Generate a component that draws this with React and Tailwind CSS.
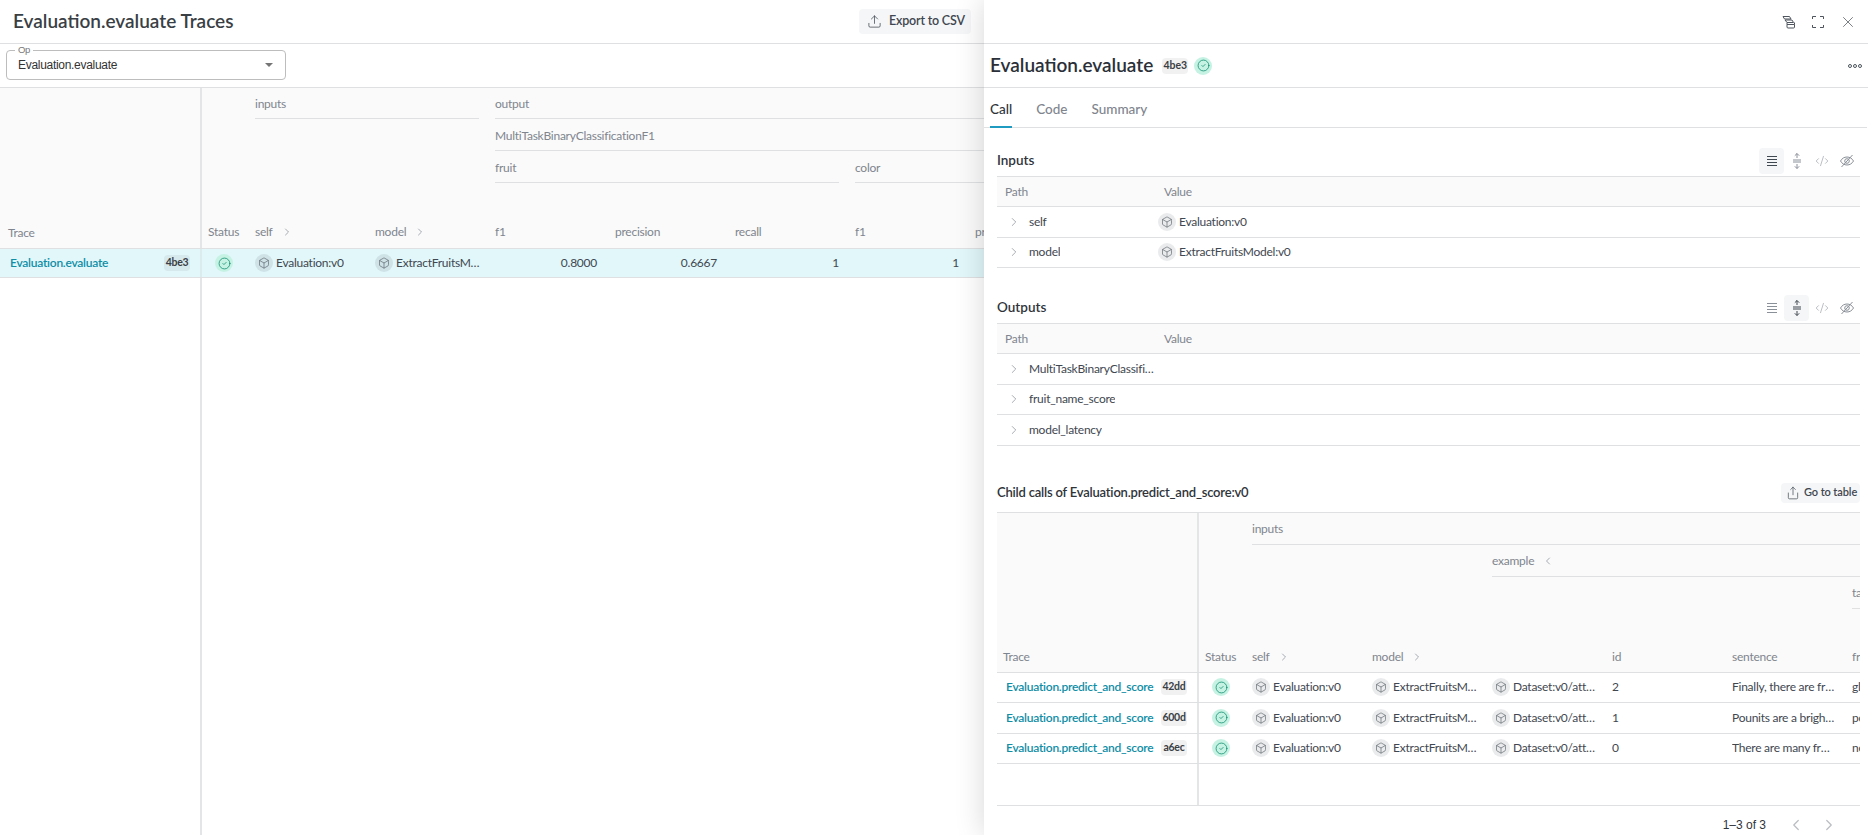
import React from "react";
import { Box, ChevronLeft, ChevronRight, CircleCheck, Upload, Share, X, CodeXml } from "lucide-react";

const sans = "font-['Lato',sans-serif]";

function Status() {
  return (
    <span className="flex h-[18px] w-[18px] items-center justify-center rounded-full bg-[#c5f2e3]">
      <CircleCheck size={13} strokeWidth={1.4} className="text-[#0a8a6a]" />
    </span>
  );
}

function Hash({ children }) {
  return (
    <span className="flex h-[16px] w-[26px] shrink-0 items-center justify-center rounded-[4px] bg-[rgba(70,60,60,0.07)] text-[10.5px] font-bold text-[#3a3f45]">
      {children}
    </span>
  );
}

function Obj({ children, className = "" }) {
  return (
    <span className={`flex min-w-0 items-center gap-[3px] ${className}`}>
      <span className="flex h-[18px] w-[18px] shrink-0 items-center justify-center rounded-full bg-[rgba(60,70,85,0.11)]">
        <Box size={12} strokeWidth={1.2} className="text-[#4e555e]" />
      </span>
      <span className="truncate text-[12px] tracking-[-0.25px] text-[#3f4750]">{children}</span>
    </span>
  );
}

function HeadLabel({ children, className = "" }) {
  return <div className={`flex items-center text-[12px] tracking-[-0.25px] text-[#7f858e] ${className}`}>{children}</div>;
}

function Chev({ left }) {
  const I = left ? ChevronLeft : ChevronRight;
  return <I size={12} strokeWidth={1.3} className="ml-[8px] text-[#79808a]" />;
}

function LeftTable() {
  return (
    <div className="flex min-h-0 flex-1 flex-col overflow-hidden">
      <div className="grid h-[161px] w-[1200px] shrink-0 grid-cols-[202px_53px_repeat(8,120px)] grid-rows-[31px_32px_32px_33px_32px] border-b border-[#dfe0e2] bg-[#fafafa]">
        <HeadLabel className="col-start-1 row-span-5 row-start-1 items-end border-r-2 border-[#e4e5e7] pb-[6px] pl-[8px]">Trace</HeadLabel>
        <HeadLabel className="col-span-2 col-start-3 row-start-1 mr-[16px] border-b border-[#dfe0e2] pt-[2px]">inputs</HeadLabel>
        <HeadLabel className="col-span-6 col-start-5 row-start-1 border-b border-[#dfe0e2] pt-[2px]">output</HeadLabel>
        <HeadLabel className="col-span-6 col-start-5 row-start-2 border-b border-[#dfe0e2] pt-[3px]">MultiTaskBinaryClassificationF1</HeadLabel>
        <HeadLabel className="col-span-3 col-start-5 row-start-3 mr-[16px] border-b border-[#dfe0e2] pt-[3px]">fruit</HeadLabel>
        <HeadLabel className="col-span-3 col-start-8 row-start-3 border-b border-[#dfe0e2] pt-[3px]">color</HeadLabel>
        <HeadLabel className="col-start-2 row-start-5 pl-[6px]">Status</HeadLabel>
        <HeadLabel className="col-start-3 row-start-5">self<Chev /></HeadLabel>
        <HeadLabel className="col-start-4 row-start-5">model<Chev /></HeadLabel>
        <HeadLabel className="col-start-5 row-start-5">f1</HeadLabel>
        <HeadLabel className="col-start-6 row-start-5">precision</HeadLabel>
        <HeadLabel className="col-start-7 row-start-5">recall</HeadLabel>
        <HeadLabel className="col-start-8 row-start-5">f1</HeadLabel>
        <HeadLabel className="col-start-9 row-start-5">precision</HeadLabel>
      </div>
      <div className="grid h-[29px] w-[1200px] shrink-0 grid-cols-[202px_53px_repeat(8,120px)] items-center border-b border-[#dfe0e2] bg-[#e1f7fa] text-[12px] tracking-[-0.25px] text-[#3f4750]">
        <div className="flex h-full items-center justify-between border-r-2 border-[#dcecee] pl-[10px] pr-[10px]">
          <span className="font-semibold text-[#0f8ea6]">Evaluation.evaluate</span>
          <Hash>4be3</Hash>
        </div>
        <div className="flex justify-center pr-[9px]"><Status /></div>
        <Obj className="pr-[16px]">Evaluation:v0</Obj>
        <Obj className="pr-[12px]">ExtractFruitsModel:v0</Obj>
        <div className="pr-[18px] text-right">0.8000</div>
        <div className="pr-[18px] text-right">0.6667</div>
        <div className="pr-[16px] text-right">1</div>
        <div className="pr-[16px] text-right">1</div>
        <div className="pr-[16px] text-right">1</div>
      </div>
      <div className="min-h-0 flex-1">
        <div className="h-full w-[202px] border-r-2 border-[#e4e5e7]" />
      </div>
    </div>
  );
}

function ToolIcon({ kind }) {
  const common = { width: 18, height: 18, viewBox: "0 0 18 18", fill: "none", stroke: "currentColor", strokeWidth: 1 };
  if (kind === "rows")
    return (
      <svg {...common}>
        <path d="M4 4.5h10M4 7.5h10M4 10.5h10M4 13.5h10" />
      </svg>
    );
  if (kind === "expand")
    return (
      <svg {...common}>
        <path d="M5 8h8M5 10h8M9 1.5V6M6.8 3.7 9 1.5l2.2 2.2M9 12v4.5M6.8 14.3 9 16.5l2.2-2.2" />
      </svg>
    );
  if (kind === "code") return <CodeXml size={14} strokeWidth={1} />;
  return (
    <svg {...common}>
      <path d="M2.5 9C4 6.4 6.2 5 9 5s5 1.4 6.5 4c-1.5 2.6-3.7 4-6.5 4S4 11.6 2.5 9Z" />
      <circle cx="9" cy="9" r="2.3" />
      <path d="M14.5 3 3.5 15" />
    </svg>
  );
}

function Toolbar({ active }) {
  const items = ["rows", "expand", "code", "eye"];
  return (
    <div className="flex h-[26px] items-center">
      {items.map((k) => (
        <span
          key={k}
          className={`flex h-[26px] w-[25px] items-center justify-center rounded-[4px] ${
            active === k ? "bg-[#f5f6f7] text-[#3f4750]" : "text-[#8a9098]"
          }`}
        >
          <ToolIcon kind={k} />
        </span>
      ))}
    </div>
  );
}

function KVSection({ title, active, rows, className = "" }) {
  return (
    <section className={`shrink-0 ${className}`}>
      <div className="mb-[2px] flex h-[26px] items-center justify-between">
        <h3 className="-mt-[1px] text-[13.5px] font-semibold text-[#2f343a]">{title}</h3>
        <div className="mr-[1px]"><Toolbar active={active} /></div>
      </div>
      <div className="border-t border-[#dfe0e2]">
        <div className="grid h-[30px] grid-cols-[153px_1fr] items-center border-b border-[#dfe0e2] bg-[#fafafa] pl-[8px] text-[12px] tracking-[-0.25px] text-[#7f858e]">
          <span>Path</span>
          <span className="pl-[6px]">Value</span>
        </div>
        {rows.map(([k, v]) => (
          <div key={k} className="grid h-[30.5px] grid-cols-[153px_1fr] items-center border-b border-[#dfe0e2] pl-[8px] text-[12px] tracking-[-0.25px] text-[#3f4750]">
            <span className="flex min-w-0 items-center pr-[2px]">
              <ChevronRight size={14} strokeWidth={1} className="ml-[2px] mr-[8px] shrink-0 text-[#6b727b]" />
              <span className="truncate">{k}</span>
            </span>
            {v ? <Obj>{v}</Obj> : <span />}
          </div>
        ))}
      </div>
    </section>
  );
}

function ChildRow({ hash, id, sentence, fr }) {
  return (
    <div className="grid h-[30.5px] w-[1200px] grid-cols-[202px_53px_repeat(8,120px)] items-center border-b border-[#dfe0e2] text-[12px] tracking-[-0.25px] text-[#3f4750]">
      <div className="flex h-full items-center justify-between border-r-2 border-[#e4e5e7] pl-[9px] pr-[10px]">
        <span className="font-semibold text-[#0f8ea6]">Evaluation.predict_and_score</span>
        <Hash>{hash}</Hash>
      </div>
      <div className="flex justify-center pr-[9px]"><Status /></div>
      <Obj className="pr-[16px]">Evaluation:v0</Obj>
      <Obj className="pr-[12px]">ExtractFruitsModel:v0</Obj>
      <Obj className="pr-[16px]">Dataset:v0/attr/rows/0</Obj>
      <div>{id}</div>
      <div className="truncate pr-[16px]">{sentence}</div>
      <div>{fr}</div>
    </div>
  );
}

function ChildTable() {
  return (
    <div className="shrink-0 overflow-hidden">
      <div className="grid h-[161px] w-[1200px] grid-cols-[202px_53px_repeat(8,120px)] grid-rows-[32px_32px_32px_33px_30px] border-y border-[#dfe0e2] bg-[#fafafa]">
        <HeadLabel className="col-start-1 row-span-5 row-start-1 items-end border-r-2 border-[#e4e5e7] pb-[6px] pl-[6px]">Trace</HeadLabel>
        <HeadLabel className="col-span-8 col-start-3 row-start-1 border-b border-[#dfe0e2] pt-[2px]">inputs</HeadLabel>
        <HeadLabel className="col-span-6 col-start-5 row-start-2 border-b border-[#dfe0e2] pt-[1px]">example<Chev left /></HeadLabel>
        <HeadLabel className="col-span-3 col-start-8 row-start-3 border-b border-[#dfe0e2] pt-[1px]">target</HeadLabel>
        <HeadLabel className="col-start-2 row-start-5 pl-[6px]">Status</HeadLabel>
        <HeadLabel className="col-start-3 row-start-5">self<Chev /></HeadLabel>
        <HeadLabel className="col-start-4 row-start-5">model<Chev /></HeadLabel>
        <HeadLabel className="col-start-6 row-start-5">id</HeadLabel>
        <HeadLabel className="col-start-7 row-start-5">sentence</HeadLabel>
        <HeadLabel className="col-start-8 row-start-5">fruit</HeadLabel>
      </div>
      <ChildRow hash="42dd" id="2" sentence="Finally, there are fruits" fr="glow" />
      <ChildRow hash="600d" id="1" sentence="Pounits are a bright green" fr="pounit" />
      <ChildRow hash="a6ec" id="0" sentence="There are many fruits" fr="neoskizzle" />
      <div className="h-[41px] w-[202px] border-r-2 border-[#e4e5e7]" />
    </div>
  );
}

function Drawer() {
  return (
    <aside className="absolute right-0 top-0 flex h-full w-[884px] flex-col bg-white shadow-[0_0_28px_rgba(0,0,0,0.16)]">
      <div className="flex h-[44px] shrink-0 items-center justify-end gap-[13px] border-b border-[#dfe0e2] pr-[11px] text-[#4e555e]">
        <svg width="16" height="16" viewBox="0 0 16 16" fill="none" stroke="currentColor" strokeWidth="1">
          <path d="M2 2.5h6.5l1.5 2.5H3.5ZM4 6h7l1.5 2.5H6ZM6 10.5h7.5v2.5a1 1 0 0 1-1 1H7a1 1 0 0 1-1-1Z" />
          <path d="M6 8.5v2M13.5 8.5v2" />
        </svg>
        <svg width="16" height="16" viewBox="0 0 16 16" fill="none" stroke="currentColor" strokeWidth="1">
          <path d="M2.5 5V2.5H6M10 2.5h3.5V5M13.5 11v2.5H10M6 13.5H2.5V11" />
        </svg>
        <X size={18} strokeWidth={1} />
      </div>
      <div className="flex h-[44px] shrink-0 items-center border-b border-[#dfe0e2] pl-[6px] pr-[6px]">
        <h2 className="text-[19px] font-semibold text-[#2b3038]">Evaluation.evaluate</h2>
        <span className="ml-[9px]"><Hash>4be3</Hash></span>
        <span className="ml-[6px]"><Status /></span>
        <span className="ml-auto flex items-center gap-[1px]">
          <span className="h-[4px] w-[4px] rounded-full border border-[#4e555e]" />
          <span className="h-[4px] w-[4px] rounded-full border border-[#4e555e]" />
          <span className="h-[4px] w-[4px] rounded-full border border-[#4e555e]" />
        </span>
      </div>
      <nav className="mr-[1px] flex h-[40px] shrink-0 items-stretch gap-[24px] border-b border-[#dfe0e2] pl-[6px] text-[13.5px] font-medium">
        <span className="-mb-px flex items-center border-b-2 border-[#1f9ac0] pt-[4px] text-[#2f343a]">Call</span>
        <span className="flex items-center pt-[4px] text-[#7f858e]">Code</span>
        <span className="flex items-center pt-[4px] text-[#7f858e]">Summary</span>
      </nav>
      <div className="flex min-h-0 flex-1 flex-col pl-[13px] pr-[8px] pt-[20px]">
        <KVSection title="Inputs" active="rows" rows={[["self", "Evaluation:v0"], ["model", "ExtractFruitsModel:v0"]]} />
        <KVSection
          title="Outputs"
          active="expand"
          className="mt-[27px]"
          rows={[["MultiTaskBinaryClassificationF1", null], ["fruit_name_score", null], ["model_latency", null]]}
        />
        <div className="mb-[9px] mt-[37px] flex h-[20px] shrink-0 items-center justify-between">
          <h3 className="text-[13px] font-semibold tracking-[-0.2px] text-[#2f343a]">Child calls of Evaluation.predict_and_score:v0</h3>
          <span className="flex h-[20px] w-[79px] items-center gap-[4px] whitespace-nowrap rounded-[4px] bg-[#f5f6f7] pl-[5px] text-[11px] font-semibold tracking-[-0.1px] text-[#3f4750]">
            <Share size={14} strokeWidth={1.2} className="shrink-0" />
            Go to table
          </span>
        </div>
        <ChildTable />
        <div className="flex h-[31px] shrink-0 items-center justify-end border-t border-[#dfe0e2] pt-[8px] font-['Liberation_Sans',sans-serif] text-[12px] text-[#2f343a]">
          <span className="mr-[21px]">1–3 of 3</span>
          <ChevronLeft size={18} strokeWidth={1.6} className="mr-[15px] text-[#b9bcc0]" />
          <ChevronRight size={18} strokeWidth={1.6} className="mr-[22px] text-[#b9bcc0]" />
        </div>
      </div>
    </aside>
  );
}

export default function App() {
  return (
    <div className={`relative flex h-[835px] w-[1868px] flex-col overflow-hidden bg-white ${sans}`}>
      <header className="flex h-[44px] shrink-0 items-center border-b border-[#dfe0e2] pl-[13px] pr-[897px]">
        <h1 className="text-[19px] font-semibold text-[#3a3f45]">Evaluation.evaluate Traces</h1>
        <button className="ml-auto flex h-[25px] w-[112px] items-center gap-[7px] rounded-[4px] bg-[#f5f6f7] pl-[8px] text-[12.5px] font-semibold tracking-[-0.2px] text-[#3f4750]">
          <Upload size={15} strokeWidth={1.2} />
          Export to CSV
        </button>
      </header>
      <div className="flex h-[44px] shrink-0 items-center border-b border-[#dfe0e2] pl-[6px]">
        <div className="relative mt-[-2px] flex h-[30px] w-[280px] items-center justify-between rounded-[4px] border border-[#bdbdbd] pl-[11px] pr-[12px] font-['Liberation_Sans',sans-serif] text-[12px] tracking-[-0.3px] text-[#333]">
          <span className="absolute -top-[6px] left-[8px] bg-white px-[3px] text-[9.5px] leading-[10px] text-[#777]">Op</span>
          <span>Evaluation.evaluate</span>
          <span className="h-0 w-0 border-x-[4px] border-t-[4px] border-x-transparent border-t-[#757575]" />
        </div>
      </div>
      <LeftTable />
      <Drawer />
    </div>
  );
}
